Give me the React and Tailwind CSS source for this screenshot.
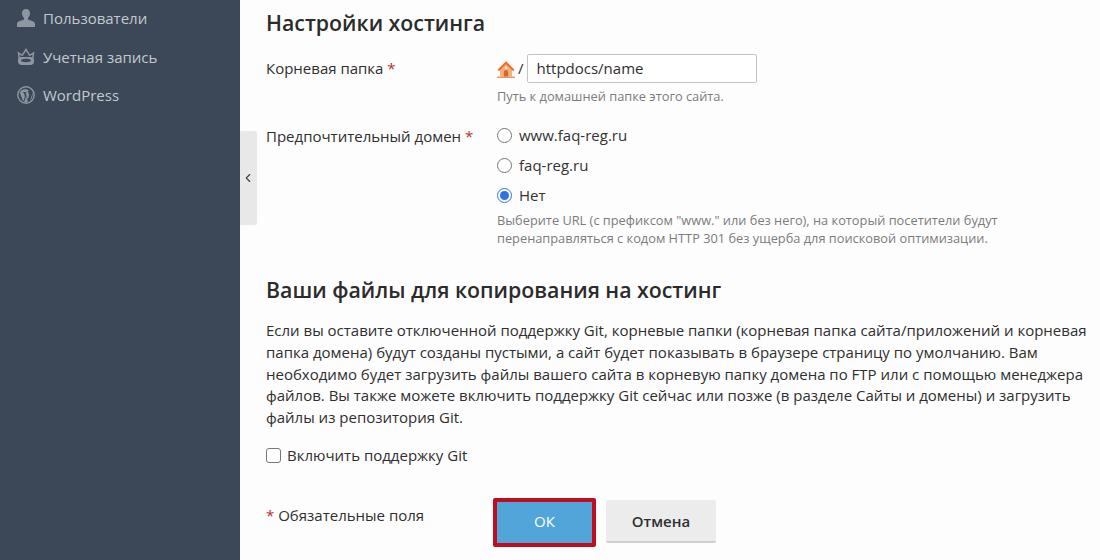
import React from "react";
import { ChevronLeft } from "lucide-react";

const UserIcon = () => (
  <svg viewBox="0 0 18 18" className="h-[18px] w-[18px]" fill="#8d96a1">
    <path d="M9 0c2.600 0 4 1.800 4 4.300 0 2-.9 3.700-2 4.700v1.600c1.500.9 7 1.400 7 4.400v3H0v-3c0-3 5.500-3.500 7-4.400V9C5.900 8 5 6.300 5 4.300 5 1.800 6.400 0 9 0z" />
  </svg>
);

const CrownIcon = () => (
  <svg viewBox="0 0 18 18" className="h-[18px] w-[18px]" fill="none">
    <path d="M2.200 10 1.500 5l3.800 2.300L9 1.500l3.700 5.800L16.500 5l-.7 5" stroke="#8d96a1" strokeWidth="1.500" />
    <path
      fillRule="evenodd"
      d="M4 9h10c2 0 3 1.100 3 2.800v1.700c0 2.300-1.500 3.500-3.500 3.500h-9C2.500 17 1 15.800 1 13.500v-1.700C1 10.100 2 9 4 9zm5 1.800c-2.900 0-5 .6-5 1.700s2.100 1.700 5 1.700 5-.6 5-1.700-2.100-1.700-5-1.700z"
      fill="#8d96a1"
    />
  </svg>
);

const WpIcon = () => (
  <svg viewBox="0 0 18 18" className="h-[18px] w-[18px]">
    <circle cx="9" cy="9" r="8.200" fill="none" stroke="#8d96a1" strokeWidth="1.400" />
    <path
      d="M2.700 6.200 6.200 15.400l1.800-5-1.200-3.600-1-.1V6h3.700v.7l-1 .1 2.300 6.700 1-3.300c.4-1.300.2-2.200-.3-3-.3-.5-.6-.9-.6-1.400 0-.6.400-1 1-1.100-2.600-2.300-7.500-1.700-9.200 2.000zM15.300 6.600c.6 2 .2 3.700-.5 5.300l-2 3.300 1.900-5.400c.4-1.200.6-2.200.6-3.200zM9.200 10.100l-2 5.800c1.200.4 2.400.3 3.700 0z"
      fill="#8d96a1"
    />
  </svg>
);

const HomeIcon = () => (
  <svg viewBox="0 0 18 18" className="h-[18px] w-[18px]">
    <path d="M3 8.500 9 3l6 5.500v8H3z" fill="#f6b27c" />
    <circle cx="9" cy="7.800" r="1" fill="#fff3e4" />
    <path d="M6.800 16.500V12c0-1.200 1-2 2.200-2s2.200.8 2.200 2v4.500z" fill="#d8672c" />
    <path d="M.5 9.800 9 1.200l8.500 8.600-1.500 1.200L9 4.100 2 11z" fill="#ea6a2a" />
    <path d="M0 17.200h18" stroke="#d9662a" strokeWidth="1" />
  </svg>
);

const sideItems = [
  { icon: <UserIcon />, label: "Пользователи" },
  { icon: <CrownIcon />, label: "Учетная запись" },
  { icon: <WpIcon />, label: "WordPress" },
];

const Radio = ({ label, checked }) => (
  <label className="flex h-[30px] items-center">
    <span
      className={
        checked
          ? "flex h-[15px] w-[15px] items-center justify-center rounded-full border border-[#2f74e0] bg-white"
          : "h-[15px] w-[15px] rounded-full border border-[#767676] bg-white"
      }
    >
      {checked && <span className="h-[9px] w-[9px] rounded-full bg-[#2f74e0]" />}
    </span>
    <span className="ml-[7px] text-[15px] text-[#333]">{label}</span>
  </label>
);

export default function App() {
  return (
    <div className="flex h-[560px] w-[1100px] overflow-hidden bg-[#fdfdfd] font-['Open_Sans',sans-serif] text-[#2f2f2f]">
      {/* Sidebar */}
      <aside className="w-[240px] shrink-0 bg-[#3c4858] pl-[17px]">
        <div className="-mt-[1px]">
          {sideItems.map((item) => (
            <div key={item.label} className="flex h-[38.500px] items-center gap-[8px]">
              {item.icon}
              <span className="text-[15px] text-[#c3c8ce]">{item.label}</span>
            </div>
          ))}
        </div>
      </aside>

      {/* Collapse handle */}
      <div className="mt-[131px] flex h-[94px] w-[17px] shrink-0 items-center justify-start rounded-r-[3px] bg-[#e8e8e8] pl-[1px]">
        <ChevronLeft size={14} strokeWidth={2} className="text-[#444]" />
      </div>

      {/* Content */}
      <main className="min-w-0 flex-1 pl-[9px] pt-[9px]">
        <h2 className="text-[21.300px] font-semibold leading-[28px] text-[#2b2b2b]">Настройки хостинга</h2>

        <div className="mt-[17px] grid grid-cols-[231px_1fr]">
          <div className="pt-[3px] text-[15px]">
            Корневая папка <span className="text-[#b5312f]">*</span>
          </div>
          <div>
            <div className="flex items-center">
              <HomeIcon />
              <span className="ml-[3px] text-[15px]">/</span>
              <div className="ml-[3px] flex h-[29px] w-[230px] items-center rounded-[2px] border border-[#c4c4c4] bg-white pl-[9px] text-[15px]">
                httpdocs/name
              </div>
            </div>
            <p className="mt-[4px] text-[12.800px] leading-[18px] text-[#7c7c7c]">Путь к домашней папке этого сайта.</p>
          </div>
        </div>

        <div className="mt-[15px] grid grid-cols-[231px_1fr]">
          <div className="pt-[5px] text-[15px]">
            Предпочтительный домен <span className="text-[#b5312f]">*</span>
          </div>
          <div>
            <Radio label="www.faq-reg.ru" />
            <Radio label="faq-reg.ru" />
            <Radio label="Нет" checked />
            <p className="mt-[1px] text-[12.800px] leading-[18px] text-[#7c7c7c]">
              Выберите URL (с префиксом "www." или без него), на который посетители будут
              <br />
              перенаправляться с кодом HTTP 301 без ущерба для поисковой оптимизации.
            </p>
          </div>
        </div>

        <h2 className="mt-[29px] text-[21.300px] font-semibold leading-[28px] text-[#2b2b2b]">Ваши файлы для копирования на хостинг</h2>

        <p className="mt-[16px] w-[825px] text-[15px] leading-[21.800px] whitespace-nowrap">
          Если вы оставите отключенной поддержку Git, корневые папки (корневая папка сайта/приложений и корневая
          <br />
          папка домена) будут созданы пустыми, а сайт будет показывать в браузере страницу по умолчанию. Вам
          <br />
          необходимо будет загрузить файлы вашего сайта в корневую папку домена по FTP или с помощью менеджера
          <br />
          файлов. Вы также можете включить поддержку Git сейчас или позже (в разделе Сайты и домены) и загрузить
          <br />
          файлы из репозитория Git.
        </p>

        <label className="mt-[15px] flex items-center">
          <span className="h-[15px] w-[15px] rounded-[3px] border border-[#767676] bg-white" />
          <span className="ml-[6px] text-[15px]">Включить поддержку Git</span>
        </label>

        <div className="mt-[32px] flex items-start">
          <div className="w-[227px] pt-[6px] text-[15px]">
            <span className="text-[#b5312f]">*</span> Обязательные поля
          </div>
          <button className="flex h-[49px] w-[103px] items-center justify-center rounded-[2px] border-[4px] border-[#c00d1e] bg-[#52a5d9] pb-[3px] text-[15px] font-medium text-white">
            ОК
          </button>
          <button className="ml-[10px] mt-[2px] h-[43px] w-[110px] rounded-[2px] border-b-2 border-[#cfcfcf] bg-[#ececec] text-[15px] font-semibold text-[#2f2f2f]">
            Отмена
          </button>
        </div>
      </main>
    </div>
  );
}
